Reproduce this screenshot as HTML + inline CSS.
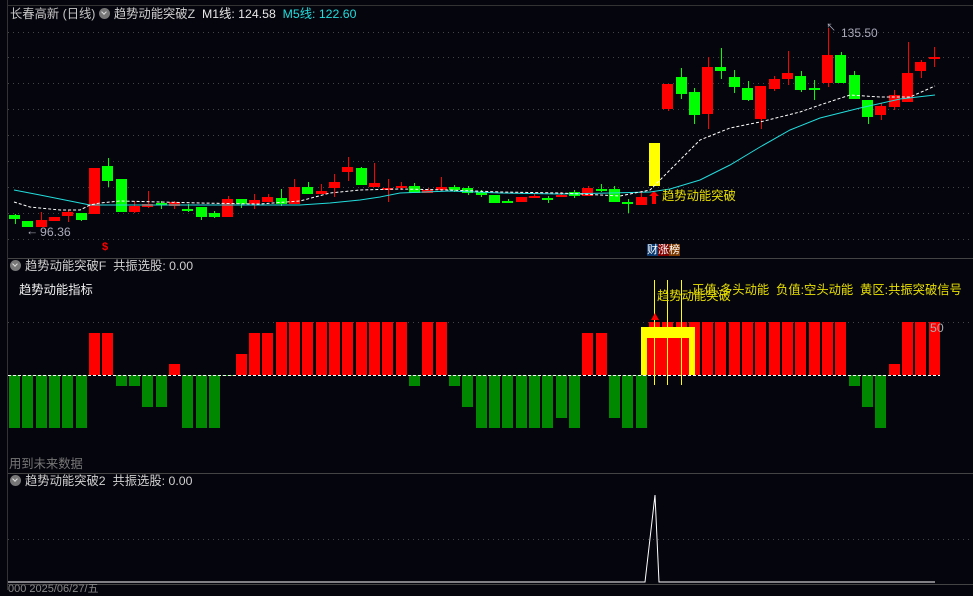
<!DOCTYPE html>
<html><head><meta charset="utf-8"><style>
html,body{margin:0;padding:0;background:#05050d;}
body{width:973px;height:590px;overflow:hidden;position:relative;font-family:"Liberation Sans","Noto Sans CJK SC",sans-serif;}
svg{position:absolute;left:0;top:0}
.t{position:absolute;font-size:12.3px;white-space:nowrap;line-height:14px}
.ic{display:inline-block;width:11px;height:11px;border-radius:50%;background:#777;vertical-align:-1px;margin-right:4px;position:relative}
.ic:after{content:"";position:absolute;left:3px;top:2px;width:3px;height:3px;border-right:1.5px solid #ddd;border-bottom:1.5px solid #ddd;transform:rotate(45deg)}
</style></head><body>
<svg id="s" width="973" height="590" xmlns="http://www.w3.org/2000/svg"></svg>
<div class="t" style="left:10px;top:7px;color:#c8c8c8">长春高新 (日线) <span class="ic"></span><span style="color:#d0d0d0">趋势动能突破Z</span>&nbsp; <span style="color:#e8e8e8">M1线: 124.58</span>&nbsp; <span style="color:#22dddd">M5线: 122.60</span></div>
<div class="t" style="left:841px;top:26px;color:#aab;font-size:12px">135.50</div>
<div class="t" style="left:40px;top:225px;color:#aab">96.36</div>
<div class="t" style="left:26px;top:224px;color:#aab">←</div>
<div class="t" style="left:826px;top:22px;color:#aab;font-size:10px">↖</div>
<div class="t" style="left:102px;top:240px;color:#f00;font-size:11px;font-weight:bold">$</div>
<div class="t" style="left:662px;top:189px;color:#e8e000">趋势动能突破</div>
<div class="t" style="left:647px;top:243px;font-size:11px;color:#fff"><span style="background:#0a3a70">财</span><span style="background:#800000">涨</span><span style="background:#7a3a00">榜</span></div>
<div class="t" style="left:10px;top:259px;color:#d0d0d0"><span class="ic"></span>趋势动能突破F&nbsp; 共振选股: 0.00</div>
<div class="t" style="left:19px;top:283px;color:#f0f0f0">趋势动能指标</div>
<div class="t" style="left:692px;top:283px;color:#e8e000">正值:多头动能&nbsp; 负值:空头动能&nbsp; 黄区:共振突破信号</div>
<div class="t" style="left:657px;top:289px;color:#e8e000">趋势动能突破</div>
<div class="t" style="left:930px;top:321px;color:#aaa">50</div>
<div class="t" style="left:9px;top:457px;color:#777">用到未来数据</div>
<div class="t" style="left:10px;top:474px;color:#d0d0d0"><span class="ic"></span>趋势动能突破2&nbsp; 共振选股: 0.00</div>
<div class="t" style="left:8px;top:582px;color:#888;font-size:11px">000 2025/06/27/五</div>
<script>
var s=document.getElementById('s'),h='';
function R(x,y,w,hh,c){h+='<rect x="'+x+'" y="'+y+'" width="'+w+'" height="'+hh+'" fill="'+c+'"/>';}
function L(x1,y1,x2,y2,c,d,w){h+='<line x1="'+x1+'" y1="'+y1+'" x2="'+x2+'" y2="'+y2+'" stroke="'+c+'" stroke-width="'+(w||1)+'"'+(d?' stroke-dasharray="'+d+'"':'')+'/>';}
L(7.5,0,7.5,590,'#333');
L(8,258.5,973,258.5,'#444');L(8,473.5,973,473.5,'#444');L(8,5.5,973,5.5,'#333');
[32,57,83,109,135,161,187,213,239].forEach(function(y){L(8,y+.5,973,y+.5,'#444','1 4');});
L(8,322.5,973,322.5,'#444','1 4');L(8,539.5,973,539.5,'#444','1 4');
var C=[[215,219,214,224,'g'],[221,227,221,227,'g'],[220,227,212,227,'r'],[217,221,217,221,'r'],[212,216,210,222,'r'],[213,220,213,221,'g'],[168,214,168,214,'r'],[166,181,158,187,'g'],[179,212,179,212,'g'],[206,212,201,213,'r'],[204,207,191,208,'r'],[203,205,201,209,'g'],[202,206,201,209,'r'],[209,210,204,212,'g'],[207,217,207,220,'g'],[213,217,211,218,'g'],[199,217,196,217,'r'],[199,204,199,208,'g'],[200,204,194,209,'r'],[197,202,194,202,'r'],[198,204,189,206,'g'],[187,204,179,204,'r'],[187,194,182,194,'g'],[191,194,184,194,'r'],[182,188,174,197,'r'],[167,172,157,181,'r'],[168,185,167,185,'g'],[183,187,163,187,'r'],[188,190,179,202,'r'],[186,188,182,190,'r'],[186,193,183,193,'g'],[190,193,188,193,'r'],[187,190,177,191,'r'],[187,190,185,192,'g'],[188,193,186,195,'g'],[192,195,190,197,'g'],[195,203,195,203,'g'],[201,203,199,203,'g'],[197,202,197,202,'r'],[196,198,193,198,'r'],[198,199,196,203,'g'],[195,197,192,197,'r'],[192,196,190,198,'g'],[188,196,186,196,'r'],[189,191,184,192,'g'],[189,202,186,202,'g'],[202,204,199,213,'g'],[197,205,191,205,'r'],[143,186,143,186,'y'],[84,109,84,111,'r'],[77,94,68,99,'g'],[92,115,88,124,'g'],[67,114,57,129,'r'],[67,71,48,79,'g'],[77,87,70,93,'g'],[88,100,81,101,'g'],[86,119,86,129,'r'],[79,89,76,91,'r'],[73,79,51,85,'r'],[76,90,71,92,'g'],[88,89,80,100,'g'],[55,83,28,87,'r'],[55,83,52,83,'g'],[75,99,71,99,'g'],[100,117,100,124,'g'],[106,115,103,120,'r'],[95,107,90,110,'r'],[73,102,42,102,'r'],[62,71,60,78,'r'],[57,59,47,67,'r']];
var col={r:'#ff0000',g:'#00ff00',y:'#ffff00'};
C.forEach(function(c,i){var x=9+13.33*i,cx=Math.round(x+5.5)+.5;L(cx,c[2],cx,c[3],col[c[4]]);R(Math.round(x),c[0],11,Math.max(2,c[1]-c[0]),col[c[4]]);});
h+='<polygon points="654,191 649,196 652,196 652,204 656,204 656,196 659,196" fill="#f00"/>';
function P(pts,c,d){h+='<polyline fill="none" stroke="'+c+'" stroke-width="1"'+(d?' stroke-dasharray="'+d+'"':'')+' points="'+pts+'"/>';}
P('14,190 40,195 75,202 90,205 140,205 300,205 330,203 360,200 380,197 400,193 450,191 500,193 560,194 610,193 650,192 670,189 700,180 730,165 760,147 790,130 820,118 860,108 900,99 935,95','#22dddd');
P('14,202 30,207 60,210 80,210 90,205 100,203 120,201 200,203 260,204 300,201 330,193 360,190 400,189 450,190 500,192 560,193 620,196 650,190 670,170 700,140 730,128 760,122 800,112 820,105 850,95 880,97 910,97 935,86','#ffffff','3 2');
var B=[428,428,428,428,428,428,333,333,386,386,407,407,364,428,428,428,376,354,333,333,322,322,322,322,322,322,322,322,322,322,386,322,322,386,407,428,428,428,428,428,428,418,428,333,333,418,428,428,322,322,322,322,322,322,322,322,322,322,322,322,322,322,322,386,407,428,364,322,322,322];
B.forEach(function(y,i){var x=Math.round(9+13.33*i);if(y<375)R(x,y,11,375-y,'#ff0000');else R(x,375,11,y-375,'#008800');});
L(8,375.5,940,375.5,'#fff','3 2');
R(641,327,54,48,'#ffff00');R(647,338,42,37,'#ff0000');
[654.5,667.5,681.5].forEach(function(x){L(x,280,x,385,'#ffff00');});
h+='<polygon points="655,313 651,320 659,320" fill="#f00"/>';
P('8,582 645,582 655,495 659,582 935,582','#ffffff');
L(8,584.5,973,584.5,'#444');
s.innerHTML=h;
</script>
</body></html>
